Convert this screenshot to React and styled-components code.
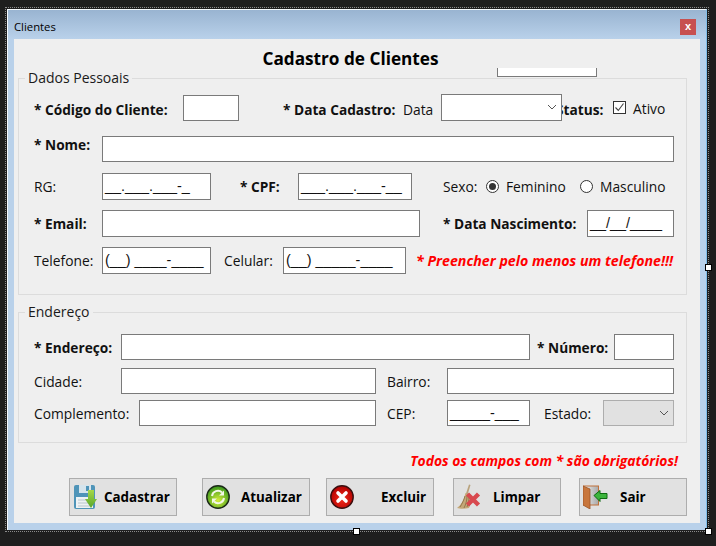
import React from "react";
import styled, { createGlobalStyle } from "styled-components";

const Global = createGlobalStyle`
  html, body {
    margin: 0;
    background: #1e1e1e;
    font-family: "Open Sans", "Noto Sans", sans-serif;
    color: #000;
  }
`;

const Designer = styled.div`
  position: relative;
  box-sizing: border-box;
  width: 704px;
  height: 525px;
  margin: 7px 0 14px 5px;
  border: 1px dotted #8a8a8a;
  padding: 1px;
`;

const Handle = styled.span`
  position: absolute;
  width: 5px;
  height: 5px;
  background: #fff;
  border: 1px solid #000;
  left: ${({ $x }) => $x}px;
  top: ${({ $y }) => $y}px;
`;

const Window = styled.div`
  box-sizing: border-box;
  width: 700px;
  height: 521px;
  border: 1px solid #f4f8fc;
  border-bottom: 0;
  border-right-color: #7fbdea;
  background: #b9d1ea;
  padding: 0 6px 6px 6px;
`;

const TitleBar = styled.div`
  height: 29px;
  margin: 0 -6px;
  padding: 3px 10px 0 6px;
  display: flex;
  align-items: center;
  justify-content: space-between;
  background: linear-gradient(#99b4d1, #b9d1ea);
  font-size: 11.3px;
  box-sizing: border-box;
`;

const Close = styled.div`
  width: 16px;
  height: 16px;
  margin-top: 2px;
  background: #c75050;
  color: #fff;
  font: bold 11px/15px "Liberation Sans", sans-serif;
  text-align: center;
`;

const Client = styled.div`
  position: relative;
  box-sizing: border-box;
  height: 484px;
  background: #efefef;
  padding: 8px 13px 0 4px;
`;

const Heading = styled.h1`
  margin: 0;
  height: 23px;
  padding-right: 4px;
  font-size: 17.2px;
  line-height: 24px;
  font-weight: 700;
  text-align: center;
`;

const StrayField = styled.div`
  position: absolute;
  left: 483px;
  top: 29px;
  width: 100px;
  height: 9px;
  box-sizing: border-box;
  background: #fff;
  border: 1px solid #7a7a7a;
  border-top: 0;
`;

const Group = styled.fieldset`
  margin: ${({ $mt }) => $mt || 0}px 0 0;
  padding: ${({ $pt }) => $pt}px 0 ${({ $pb }) => $pb}px 15px;
  border: 1px solid #dcdcdc;
  display: block;
  min-width: 0;
  box-sizing: border-box;
`;

const Legend = styled.legend`
  margin-left: -9px;
  padding: 0 3px;
  height: 16px;
  font-size: 14px;
  line-height: 16px;
  color: #1a1a1a;
`;

const Row = styled.div`
  display: flex;
  align-items: center;
  height: ${({ $h }) => $h}px;
  margin-top: ${({ $mt }) => $mt || 0}px;
`;

const Label = styled.div`
  flex: none;
  width: ${({ $w }) => ($w ? `${$w}px` : "auto")};
  margin-left: ${({ $ml }) => $ml || 0}px;
  margin-top: ${({ $dy }) => $dy || 0}px;
  margin-bottom: ${({ $up }) => $up || 0}px;
  font-size: ${({ $bold }) => ($bold ? 13.7 : 13.8)}px;
  font-weight: ${({ $bold }) => ($bold ? 700 : 400)};
  white-space: nowrap;
  color: #111;
`;

const Field = styled.div`
  flex: none;
  box-sizing: border-box;
  width: ${({ $w }) => $w}px;
  height: ${({ $h }) => $h || 26}px;
  margin-left: ${({ $ml }) => $ml || 0}px;
  margin-top: ${({ $dy }) => $dy || 0}px;
  background: #fff;
  border: 1px solid #7a7a7a;
  padding-left: 2px;
  font-family: "Liberation Sans", sans-serif;
  font-size: 14.4px;
  line-height: 24px;
  white-space: nowrap;
  overflow: hidden;
  color: #111;
`;

const Combo = styled(Field)`
  position: relative;
  z-index: 1;
  display: flex;
  align-items: center;
  justify-content: flex-end;
  padding: 0 4px 0 0;
  background: ${({ $disabled }) => ($disabled ? "#e1e1e1" : "#fff")};
  border-color: ${({ $disabled }) => ($disabled ? "#adadad" : "#7a7a7a")};
`;

const Toggle = styled.span`
  flex: none;
  box-sizing: border-box;
  display: flex;
  align-items: center;
  justify-content: center;
  width: 13px;
  height: 13px;
  margin-left: ${({ $ml }) => $ml || 0}px;
  border: 1px solid #333;
  background: #fff;
  border-radius: ${({ $round }) => ($round ? "50%" : 0)};
`;

const Dot = styled.span`
  width: 7px;
  height: 7px;
  border-radius: 50%;
  background: #333;
`;

const Warning = styled.div`
  flex: none;
  margin-left: ${({ $ml }) => $ml || 0}px;
  color: #ff0000;
  font-size: 14.2px;
  font-weight: 700;
  font-style: italic;
  white-space: nowrap;
`;

const Note = styled(Warning)`
  height: 26px;
  margin: 0;
  padding: 8px 9px 0 0;
  box-sizing: border-box;
  font-size: 13.9px;
  line-height: 19px;
  text-align: right;
`;

const Actions = styled.div`
  display: flex;
  margin-top: 9px;
`;

const Action = styled.button`
  flex: none;
  display: flex;
  align-items: center;
  box-sizing: border-box;
  width: 108px;
  height: 38px;
  margin-left: ${({ $ml }) => $ml}px;
  padding: 0 0 0 3px;
  background: #e1e1e1;
  border: 1px solid #adadad;
  font-family: inherit;
  font-size: 13.4px;
  font-weight: 700;
  color: #000;
`;

const ActionText = styled.span`
  margin-left: ${({ $ml }) => $ml}px;
`;

const Chevron = () => (
  <svg width="10" height="6" viewBox="0 0 10 6">
    <path d="M1 1l4 4 4-4" fill="none" stroke="#555" strokeWidth="1" />
  </svg>
);

const Tick = () => (
  <svg width="11" height="11" viewBox="0 0 11 11">
    <path d="M1.5 5.5l2.8 3 5.2-7" fill="none" stroke="#444" strokeWidth="1.1" />
  </svg>
);

const SaveIcon = () => (
  <svg width="24" height="26" viewBox="0 0 24 26">
    <defs>
      <linearGradient id="saveArrow" x1="0" y1="0" x2="0" y2="1">
        <stop offset="0" stopColor="#a6d84a" />
        <stop offset="1" stopColor="#58a62a" />
      </linearGradient>
    </defs>
    <path d="M1 3a2 2 0 0 1 2-2h17a2 2 0 0 1 2 2v20a2 2 0 0 1-2 2H3a2 2 0 0 1-2-2z" fill="#4f94b8" />
    <rect x="6" y="1" width="12" height="8" fill="#d6e4ec" />
    <rect x="13" y="2" width="3" height="5" fill="#4f94b8" />
    <rect x="3" y="13" width="17" height="11" fill="#eef2f4" />
    <path d="M5 16h12M5 19h12M5 22h12" stroke="#b9c6ce" strokeWidth="1" />
    <path d="M15 6h6v9h3l-6 9-6-9h3z" fill="url(#saveArrow)" />
  </svg>
);

const RefreshIcon = () => (
  <svg width="24" height="24" viewBox="0 0 24 24">
    <defs>
      <radialGradient id="refreshBall" cx="0.5" cy="0.65" r="0.6">
        <stop offset="0" stopColor="#d6ee3c" />
        <stop offset="1" stopColor="#3f9a1c" />
      </radialGradient>
    </defs>
    <circle cx="12" cy="12" r="11.2" fill="url(#refreshBall)" stroke="#1c2a18" strokeWidth="1.4" />
    <path d="M6 11a6 6 0 0 1 10-3.6" fill="none" stroke="#f4f8e8" strokeWidth="2" />
    <path d="M18 5.5v5h-5z" fill="#f4f8e8" />
    <path d="M18 13a6 6 0 0 1-10 3.6" fill="none" stroke="#f4f8e8" strokeWidth="2" />
    <path d="M6 18.5v-5h5z" fill="#f4f8e8" />
  </svg>
);

const DeleteIcon = () => (
  <svg width="24" height="24" viewBox="0 0 24 24">
    <defs>
      <radialGradient id="deleteBall" cx="0.5" cy="0.6" r="0.6">
        <stop offset="0" stopColor="#f42a1a" />
        <stop offset="1" stopColor="#b00000" />
      </radialGradient>
    </defs>
    <circle cx="12" cy="12" r="11.2" fill="url(#deleteBall)" stroke="#3a1010" strokeWidth="1.4" />
    <path d="M8 8l8 8M16 8l-8 8" stroke="#fff" strokeWidth="3.6" strokeLinecap="round" />
  </svg>
);

const BroomIcon = () => (
  <svg width="24" height="26" viewBox="0 0 24 26">
    <path d="M12 0.500l1.500 .5-3 10-1.800-.5z" fill="#b8a27c" />
    <path d="M8.500 9l4.500 2c1.500 5 1 9-1 13-4 1-9 1-12 0 4-3 7-8 8.500-15z" fill="#c4a777" />
    <path d="M8 12c-1 4-3 8-5 11M10 12c0 4-1 8-3 12M12 13c0 4-1 7-2 10" stroke="#94784e" strokeWidth="1" fill="none" />
    <path d="M10.500 10l11 11M21.500 10l-11 11" stroke="#d8494f" strokeWidth="4.400" />
  </svg>
);

const DoorIcon = () => (
  <svg width="25" height="24" viewBox="0 0 25 24">
    <defs>
      <linearGradient id="doorLeaf" x1="0" y1="0" x2="1" y2="0">
        <stop offset="0" stopColor="#f2f2f2" />
        <stop offset="1" stopColor="#a8a8a8" />
      </linearGradient>
    </defs>
    <rect x="0.500" y="1" width="15" height="19" fill="url(#doorLeaf)" stroke="#c0713a" />
    <path d="M0 1l7 3v20l-7-4z" fill="#c8763c" stroke="#9a5426" strokeWidth="0.8" />
    <path d="M11 10.500l6-5v3h7v5h-7v3z" fill="#3cb43c" stroke="#0c6a10" strokeWidth="1" />
  </svg>
);

const App = () => {
  return (
    <>
      <Global />
      <Designer>
        <Handle $x={347} $y={520} />
        <Handle $x={699} $y={520} />
        <Handle $x={699} $y={256} />
        <Window>
          <TitleBar>
            <span>Clientes</span>
            <Close>x</Close>
          </TitleBar>
          <Client>
            <Heading>Cadastro de Clientes</Heading>
            <StrayField />

            <Group $pt={7} $pb={20}>
              <Legend>Dados Pessoais</Legend>
              <Row $h={28}>
                <Label $bold $w={149} $dy={4}>* Código do Cliente:</Label>
                <Field $w={56} $dy={2} />
                <Label $bold $w={112} $ml={44} $dy={4}>* Data Cadastro:</Label>
                <Label $w={38} $ml={8} $dy={4}>Data</Label>
                <Combo $w={121} $h={27}><Chevron /></Combo>
                <Label $bold $w={47} $ml={-6} $dy={4}>Status:</Label>
                <Toggle $ml={10}><Tick /></Toggle>
                <Label $ml={7} $dy={2}>Ativo</Label>
              </Row>
              <Row $h={26} $mt={15}>
                <Label $bold $w={68} $up={10}>* Nome:</Label>
                <Field $w={572} />
              </Row>
              <Row $h={27} $mt={11}>
                <Label $w={68}>RG:</Label>
                <Field $w={109} $h={27}>__.___.___-_</Field>
                <Label $bold $w={58} $ml={29}>* CPF:</Label>
                <Field $w={114} $h={27}>___.___.___-__</Field>
                <Label $w={43} $ml={31}>Sexo:</Label>
                <Toggle $round><Dot /></Toggle>
                <Label $w={74} $ml={7}>Feminino</Label>
                <Toggle $round />
                <Label $ml={7}>Masculino</Label>
              </Row>
              <Row $h={27} $mt={10}>
                <Label $bold $w={68}>* Email:</Label>
                <Field $w={318} $h={27} />
                <Label $bold $w={144} $ml={23}>* Data Nascimento:</Label>
                <Field $w={87} $h={27}>__/__/____</Field>
              </Row>
              <Row $h={27} $mt={10}>
                <Label $w={68}>Telefone:</Label>
                <Field $w={109} $h={27}>(__) ____-____</Field>
                <Label $w={59} $ml={13}>Celular:</Label>
                <Field $w={123} $h={27}>(__) _____-____</Field>
                <Warning $ml={10}>* Preencher pelo menos um telefone!!!</Warning>
              </Row>
            </Group>

            <Group $mt={9} $pt={14} $pb={16}>
              <Legend>Endereço</Legend>
              <Row $h={26}>
                <Label $bold $w={87}>* Endereço:</Label>
                <Field $w={409} />
                <Label $bold $w={77} $ml={7}>* Número:</Label>
                <Field $w={60} />
              </Row>
              <Row $h={26} $mt={8}>
                <Label $w={87}>Cidade:</Label>
                <Field $w={255} />
                <Label $w={60} $ml={11}>Bairro:</Label>
                <Field $w={227} />
              </Row>
              <Row $h={26} $mt={6}>
                <Label $w={105}>Complemento:</Label>
                <Field $w={237} />
                <Label $w={60} $ml={11}>CEP:</Label>
                <Field $w={83}>_____-___</Field>
                <Label $w={59} $ml={14}>Estado:</Label>
                <Combo $w={71} $disabled><Chevron /></Combo>
              </Row>
            </Group>

            <Note>Todos os campos com * são obrigatórios!</Note>

            <Actions>
              <Action $ml={51}><SaveIcon /><ActionText $ml={7}>Cadastrar</ActionText></Action>
              <Action $ml={25}><RefreshIcon /><ActionText $ml={11}>Atualizar</ActionText></Action>
              <Action $ml={16}><DeleteIcon /><ActionText $ml={27}>Excluir</ActionText></Action>
              <Action $ml={19}><BroomIcon /><ActionText $ml={12}>Limpar</ActionText></Action>
              <Action $ml={18}><DoorIcon /><ActionText $ml={12}>Sair</ActionText></Action>
            </Actions>
          </Client>
        </Window>
      </Designer>
    </>
  );
};

export default App;
